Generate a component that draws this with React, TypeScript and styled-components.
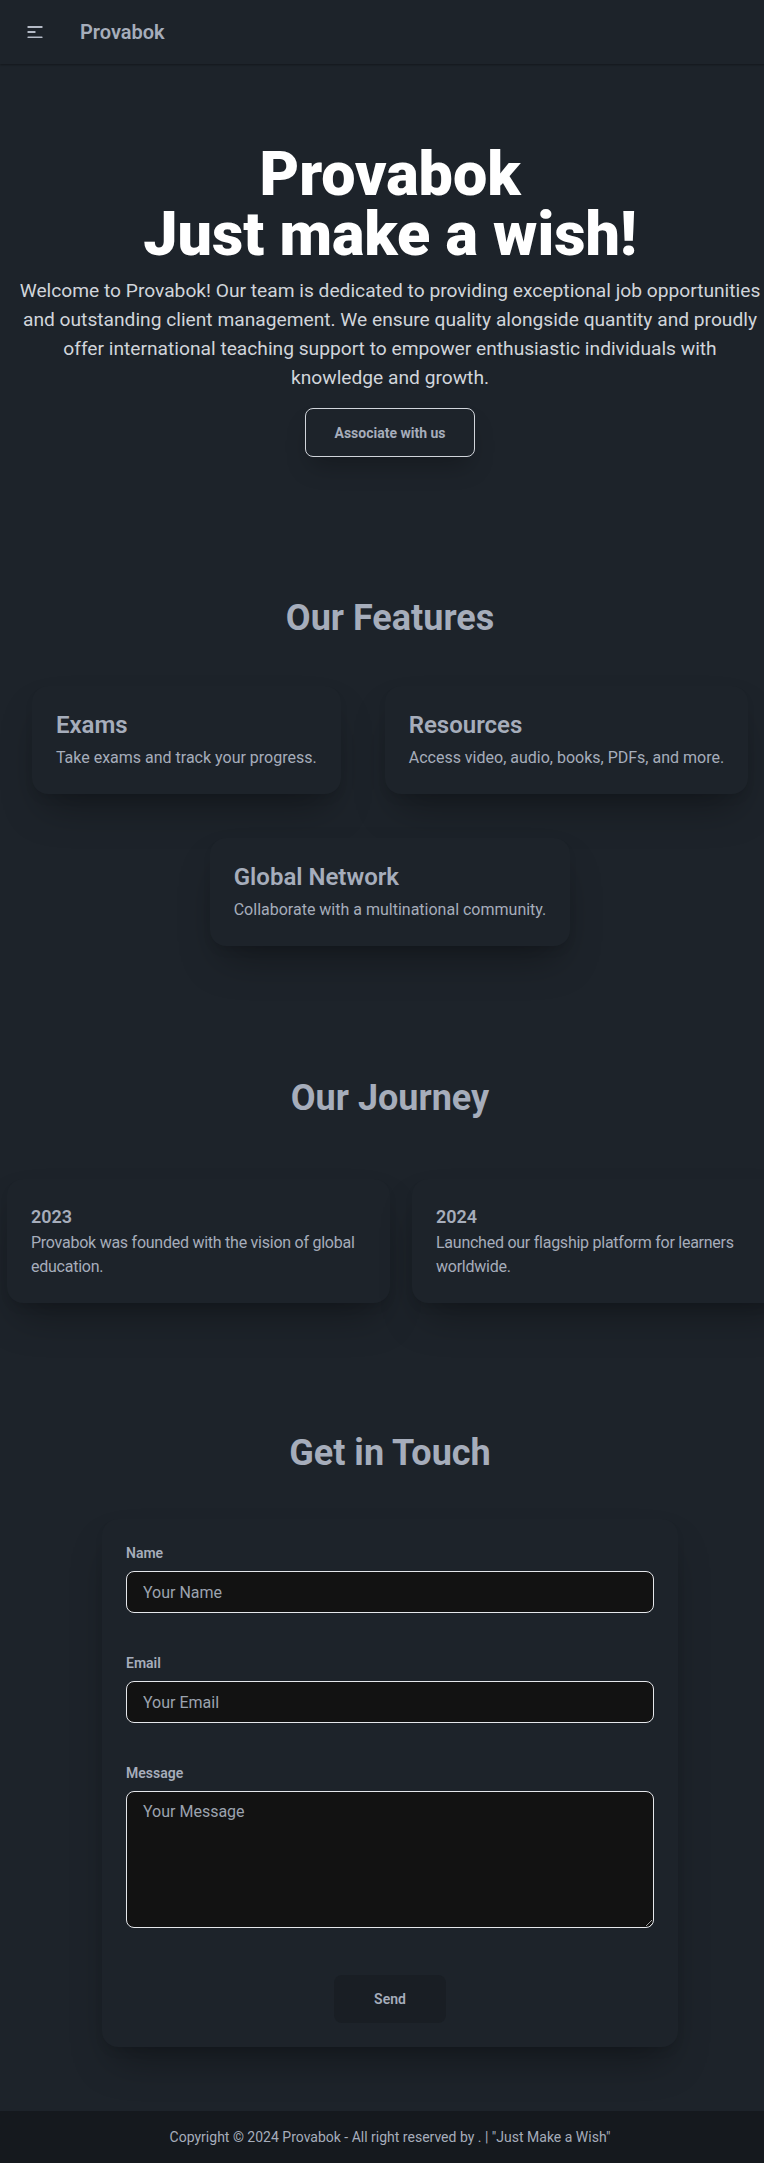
import React from "react";
import styled, { createGlobalStyle } from "styled-components";

const GlobalStyle = createGlobalStyle`
  html, body {
    margin: 0;
    padding: 0;
    background: #1d232a;
    overflow-x: hidden;
  }
  body {
    font-family: "Segoe UI", Roboto, "Noto Sans", sans-serif;
    color: #a6adbb;
  }
  * { box-sizing: border-box; }
`;

const Page = styled.div`
  width: 780px;
  display: flex;
  flex-direction: column;
  background: #1d232a;
`;

const NavBar = styled.header`
  height: 64px;
  display: flex;
  align-items: center;
  padding: 0 0 0 27px;
  box-shadow: 0 1px 2px rgba(0, 0, 0, 0.35);
  position: relative;
  z-index: 1;
`;

const MenuButton = styled.button`
  display: flex;
  align-items: center;
  justify-content: center;
  padding: 0;
  border: none;
  background: transparent;
  color: #b4bac6;
  cursor: pointer;
`;

const Brand = styled.a`
  margin-left: 37px;
  font-size: 20px;
  font-weight: 600;
  line-height: 28px;
  color: #a6adbb;
  text-decoration: none;
`;

const Hero = styled.section`
  padding: 80px 16px 0;
  display: flex;
  flex-direction: column;
  align-items: center;
  text-align: center;
`;

const HeroTitle = styled.h1`
  margin: 0;
  font-size: 61px;
  font-weight: 900;
  line-height: 60px;
  color: #ffffff;
`;

const Lead = styled.p`
  margin: 12px 0 0;
  max-width: 748px;
  font-size: 19.2px;
  line-height: 29px;
  color: #d1d5db;
`;

const OutlineButton = styled.button`
  margin-top: 16px;
  height: 49px;
  padding: 0 28px;
  border: 1px solid #d1d5db;
  border-radius: 8px;
  background: transparent;
  color: #a6adbb;
  font-family: inherit;
  font-size: 14px;
  font-weight: 700;
  box-shadow: 0 14px 24px -6px rgba(0, 0, 0, 0.25);
  cursor: pointer;
`;

const Section = styled.section<{ $top: number }>`
  padding-top: ${(p) => p.$top}px;
  display: flex;
  flex-direction: column;
  align-items: center;
`;

const SectionTitle = styled.h2`
  margin: 0;
  font-size: 36px;
  font-weight: 700;
  line-height: 40px;
  color: #a6adbb;
  text-align: center;
`;

const FeatureGrid = styled.div`
  margin-top: 48px;
  width: 100%;
  display: flex;
  flex-wrap: wrap;
  justify-content: center;
  gap: 44px;
`;

const Card = styled.div`
  background: #1d232a;
  border-radius: 16px;
  box-shadow: 0 22px 40px -12px rgba(0, 0, 0, 0.35), 0 6px 12px -4px rgba(0, 0, 0, 0.12);
  padding: 24px;
  display: flex;
  flex-direction: column;
`;

const FeatureCard = styled(Card)`
  gap: 6px;
`;

const CardTitle = styled.h3`
  margin: 0;
  font-size: 24px;
  font-weight: 600;
  line-height: 30px;
  color: #a6adbb;
`;

const CardText = styled.p<{ $tight?: boolean }>`
  margin: 0;
  font-size: 16px;
  line-height: 24px;
  color: #a6adbb;
  letter-spacing: ${(p) => (p.$tight ? "-0.25px" : "0")};
`;

const JourneyRow = styled.div`
  margin-top: 61px;
  width: 100%;
  display: flex;
  gap: 22px;
  padding-left: 7px;
`;

const JourneyCard = styled(Card)`
  flex: 0 0 383px;
`;

const Year = styled.h3`
  margin: 0;
  font-size: 18px;
  font-weight: 600;
  line-height: 28px;
  color: #a6adbb;
`;

const FormCard = styled.form`
  margin-top: 46px;
  width: 576px;
  padding: 24px;
  border-radius: 16px;
  background: #1d232a;
  box-shadow: 0 22px 40px -12px rgba(0, 0, 0, 0.35), 0 6px 12px -4px rgba(0, 0, 0, 0.12);
  display: flex;
  flex-direction: column;
`;

const Field = styled.label`
  display: flex;
  flex-direction: column;
  gap: 8px;
  & + & {
    margin-top: 40px;
  }
`;

const LabelText = styled.span`
  font-size: 14px;
  font-weight: 600;
  line-height: 20px;
  color: #a6adbb;
`;

const inputBase = `
  width: 100%;
  background: #121212;
  border: 1px solid #e5e7eb;
  border-radius: 8px;
  color: #d1d5db;
  font-family: inherit;
  font-size: 16px;
  outline: none;
  &::placeholder { color: #9ca3af; }
`;

const TextInput = styled.input`
  ${inputBase}
  height: 42px;
  padding: 0 16px;
`;

const TextArea = styled.textarea`
  ${inputBase}
  height: 137px;
  padding: 8px 16px;
  line-height: 24px;
  resize: vertical;
`;

const SendButton = styled.button`
  margin: 47px auto 0;
  width: 112px;
  height: 48px;
  border: none;
  border-radius: 8px;
  background: #191e24;
  color: #a6adbb;
  font-family: inherit;
  font-size: 14px;
  font-weight: 600;
  cursor: pointer;
`;

const Footer = styled.footer`
  margin-top: 64px;
  height: 52px;
  background: #15191e;
  display: flex;
  align-items: center;
  justify-content: center;
  font-size: 14px;
  line-height: 20px;
  color: #a6adbb;
`;

const MenuIcon = () => (
  <svg width="16" height="12" viewBox="0 0 16 12" fill="none">
    <rect x="0.5" y="0" width="15" height="2" rx="0.5" fill="currentColor" />
    <rect x="0.5" y="5" width="8" height="2" rx="0.5" fill="currentColor" />
    <rect x="0.5" y="10.5" width="15" height="2" rx="0.5" fill="currentColor" />
  </svg>
);

const features = [
  { title: "Exams", text: "Take exams and track your progress." },
  { title: "Resources", text: "Access video, audio, books, PDFs, and more." },
  { title: "Global Network", text: "Collaborate with a multinational community." },
];

const journey = [
  { year: "2023", text: "Provabok was founded with the vision of global education." },
  { year: "2024", text: "Launched our flagship platform for learners worldwide." },
];

export default function App() {
  return (
    <>
      <GlobalStyle />
      <Page>
        <NavBar>
          <MenuButton aria-label="Menu">
            <MenuIcon />
          </MenuButton>
          <Brand href="#">Provabok</Brand>
        </NavBar>

        <Hero>
          <HeroTitle>
            Provabok
            <br />
            Just make a wish!
          </HeroTitle>
          <Lead>
            Welcome to Provabok! Our team is dedicated to providing exceptional job opportunities and
            outstanding client management. We ensure quality alongside quantity and proudly offer
            international teaching support to empower enthusiastic individuals with knowledge and
            growth.
          </Lead>
          <OutlineButton>Associate with us</OutlineButton>
        </Hero>

        <Section $top={141}>
          <SectionTitle>Our Features</SectionTitle>
          <FeatureGrid>
            {features.map((f) => (
              <FeatureCard key={f.title}>
                <CardTitle>{f.title}</CardTitle>
                <CardText>{f.text}</CardText>
              </FeatureCard>
            ))}
          </FeatureGrid>
        </Section>

        <Section $top={132}>
          <SectionTitle>Our Journey</SectionTitle>
          <JourneyRow>
            {journey.map((j) => (
              <JourneyCard key={j.year}>
                <Year>{j.year}</Year>
                <CardText $tight>{j.text}</CardText>
              </JourneyCard>
            ))}
          </JourneyRow>
        </Section>

        <Section $top={130}>
          <SectionTitle>Get in Touch</SectionTitle>
          <FormCard onSubmit={(e) => e.preventDefault()}>
            <Field>
              <LabelText>Name</LabelText>
              <TextInput type="text" placeholder="Your Name" />
            </Field>
            <Field>
              <LabelText>Email</LabelText>
              <TextInput type="email" placeholder="Your Email" />
            </Field>
            <Field>
              <LabelText>Message</LabelText>
              <TextArea placeholder="Your Message" />
            </Field>
            <SendButton type="submit">Send</SendButton>
          </FormCard>
        </Section>

        <Footer>Copyright © 2024 Provabok - All right reserved by . | "Just Make a Wish"</Footer>
      </Page>
    </>
  );
}
